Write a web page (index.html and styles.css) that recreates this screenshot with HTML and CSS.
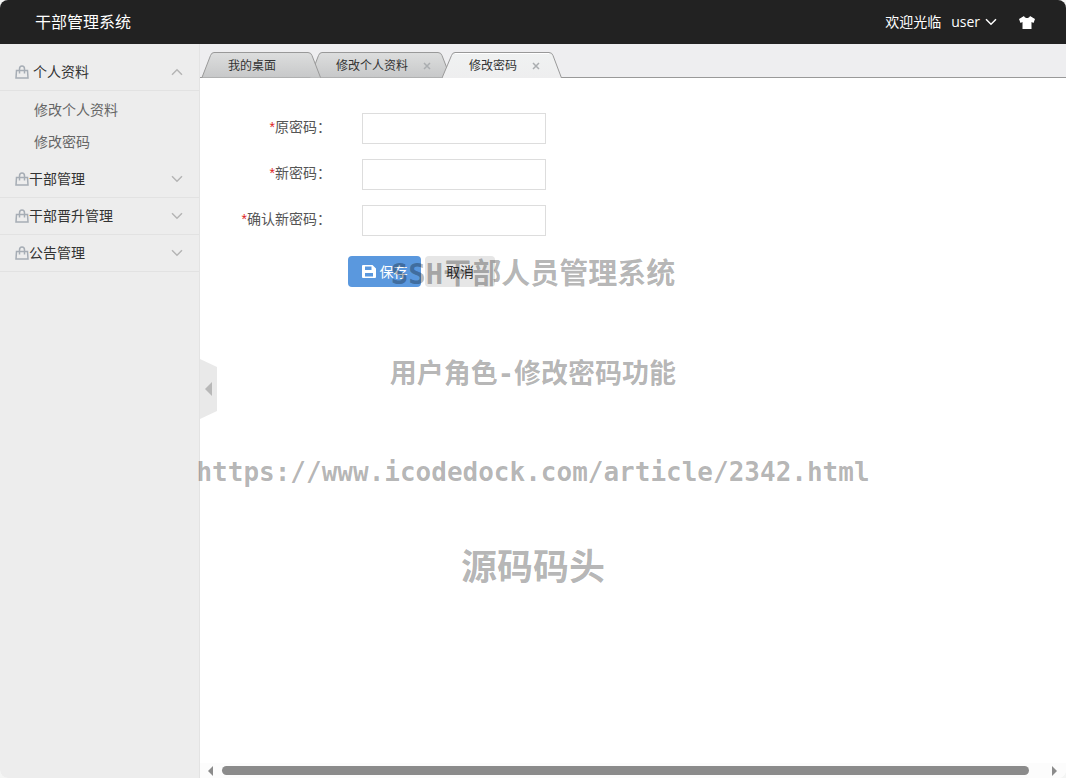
FILE: index.html
```
<!DOCTYPE html>
<html lang="zh-CN">
<head>
<meta charset="utf-8">
<title>干部管理系统</title>
<link rel="stylesheet" href="styles.css">
</head>
<body>
<svg class="defs" aria-hidden="true">
  <defs>
    <linearGradient id="tab-idle" x1="0" y1="0" x2="0" y2="1"><stop offset="0" stop-color="#dddede"/><stop offset="1" stop-color="#c7c8c9"/></linearGradient>
    <linearGradient id="tab-active" x1="0" y1="0" x2="0" y2="1"><stop offset="0" stop-color="#f0f2f2"/><stop offset="1" stop-color="#eeeeef"/></linearGradient>
    <symbol id="bag" viewBox="0 0 14 14"><path d="M1.500 5.500h11l.5 7.500H1zM4.500 8.500V4C4.500 0 9.500 0 9.500 4v4.500" fill="none" stroke="#a6adb5" stroke-width="1.500"/></symbol>
    <symbol id="down" viewBox="0 0 12 8"><path d="M1 1.200l5 5 5-5" fill="none" stroke="currentColor" stroke-width="1.500"/></symbol>
    <symbol id="up" viewBox="0 0 12 8"><path d="M1 6.700l5-5 5 5" fill="none" stroke="currentColor" stroke-width="1.500"/></symbol>
    <symbol id="cross" viewBox="0 0 8 8"><path d="M1 1l6 6M7 1l-6 6" stroke="currentColor" stroke-width="1.500"/></symbol>
  </defs>
</svg>
<div class="app">
  <header class="topbar">
    <a class="brand" href="#">干部管理系统</a>
    <nav class="user-nav">
      <span>欢迎光临</span>
      <a class="user" href="#">user<svg class="chevron"><use href="#down"/></svg></a>
      <button class="skin" type="button" aria-label="换肤"><svg viewBox="0 0 16 13"><path d="M5 0L0 3l1.500 4L3.500 6v7h9V6l2 1L16 3l-5-3C10 2.800 6 2.800 5 0z" fill="#fff"/></svg></button>
    </nav>
  </header>
  <div class="body">
    <aside class="sidebar">
      <button class="group spaced" type="button"><svg class="bag"><use href="#bag"/></svg><span>个人资料</span><svg class="chevron"><use href="#up"/></svg></button>
      <ul class="submenu">
        <li><a href="#">修改个人资料</a></li>
        <li><a href="#">修改密码</a></li>
      </ul>
      <button class="group" type="button"><svg class="bag"><use href="#bag"/></svg><span>干部管理</span><svg class="chevron"><use href="#down"/></svg></button>
      <button class="group" type="button"><svg class="bag"><use href="#bag"/></svg><span>干部晋升管理</span><svg class="chevron"><use href="#down"/></svg></button>
      <button class="group" type="button"><svg class="bag"><use href="#bag"/></svg><span>公告管理</span><svg class="chevron"><use href="#down"/></svg></button>
    </aside>
    <main class="main">
      <div class="tabs">
        <div class="tab first">
          <svg class="shape" viewBox="0 0 120 26" preserveAspectRatio="none"><path d="M1 25.500L9.500 3.500Q10.500.5 13 .5H107Q110 .5 111 3.500L119.500 25.500" fill="url(#tab-idle)" stroke="#999"/></svg>
          <a href="#">我的桌面</a>
        </div>
        <div class="tab second">
          <svg class="shape" viewBox="0 0 142 26" preserveAspectRatio="none"><path d="M1 25.500L9.500 3.500Q10.500.5 13 .5H129Q132 .5 133 3.500L141.500 25.500" fill="url(#tab-idle)" stroke="#999"/></svg>
          <a href="#">修改个人资料</a>
          <button class="close" type="button" aria-label="关闭修改个人资料"><svg><use href="#cross"/></svg></button>
        </div>
        <div class="tab active">
          <svg class="shape" viewBox="0 0 120 26" preserveAspectRatio="none"><path d="M0 26L9.500 3.500Q10.500.5 13 .5H107Q110 .5 111 3.500L119.500 26" fill="url(#tab-active)" stroke="#999"/><path d="M13 1.500H107" stroke="#fff"/></svg>
          <a href="#">修改密码</a>
          <button class="close" type="button" aria-label="关闭修改密码"><svg><use href="#cross"/></svg></button>
        </div>
      </div>
      <form class="form">
        <div class="row"><label for="old"><span class="star">*</span>原密码：</label><input id="old" type="password"></div>
        <div class="row"><label for="new"><span class="star">*</span>新密码：</label><input id="new" type="password"></div>
        <div class="row"><label for="again"><span class="star">*</span>确认新密码：</label><input id="again" type="password"></div>
        <div class="actions">
          <button class="btn save" type="button"><svg viewBox="0 0 14 13"><path d="M0 1q0-1 1-1h9.500L14 3.500V12q0 1-1 1H1q-1 0-1-1zM3 1.500V5h6.500V1.500zM3 8v3.500h8V8z" fill="#fff" fill-rule="evenodd"/></svg>保存</button>
          <button class="btn cancel" type="button">取消</button>
        </div>
      </form>
      <div class="scrollbar">
        <svg viewBox="0 0 5 10"><path d="M5 0v10L0 5z" fill="#8b8b8b"/></svg>
        <div class="thumb"></div>
        <svg viewBox="0 0 5 10"><path d="M0 0v10l5-5z" fill="#8b8b8b"/></svg>
      </div>
      <button class="collapse" type="button" aria-label="收起菜单"><svg viewBox="0 0 17 60"><path d="M0 0l17 8v44L0 60z" fill="#e9e9e9"/><path d="M12 23v14l-7-7z" fill="#b8b8b8"/></svg></button>
    </main>
  </div>
  <div class="watermark">
    <p class="mark-title">SSH干部人员管理系统</p>
    <p class="mark-sub">用户角色-修改密码功能</p>
    <p class="mark-url">https://www.icodedock.com/article/2342.html</p>
    <p class="mark-site">源码码头</p>
  </div>
</div>
</body>
</html>
```
FILE: styles.css
```
* { box-sizing: border-box; }
body { margin: 0; background: #f4f5f4; font: 14px/20px "Open Sans", "Noto Sans CJK SC", sans-serif; color: #333; }
a { color: inherit; text-decoration: none; }
button { border: 0; padding: 0; background: none; color: inherit; font: inherit; cursor: pointer; }
svg { display: block; flex: none; }
.defs { position: absolute; width: 0; height: 0; }
.app { position: relative; display: flex; flex-direction: column; min-height: 100vh; border-radius: 8px; overflow: hidden; background: #fff; }

.topbar { display: flex; align-items: center; justify-content: space-between; height: 44px; padding: 0 31px 0 35px; background: #222; color: #fff; }
.brand { font-size: 16px; }
.user-nav, .user { display: flex; align-items: center; }
.user { margin: 0 22px 0 10px; gap: 5px; }
.chevron { width: 12px; height: 8px; }
.skin svg { width: 16px; height: 13px; }

.body { display: flex; flex: 1; }
.sidebar { width: 200px; padding-top: 10px; background: #ededed; border-right: 1px solid #e3e3e3; }
.group { display: flex; align-items: center; width: 100%; height: 37px; padding: 0 16px 0 15px; border-bottom: 1px solid #e2e2e2; text-align: left; }
.group span { flex: 1; }
.group .chevron { color: #b5b5b5; }
.spaced span { padding-left: 4px; }
.bag { width: 14px; height: 14px; }
.submenu { margin: 0; padding: 3px 0 3px 34px; list-style: none; color: #666; line-height: 32px; }

.main { position: relative; display: flex; flex: 1; flex-direction: column; min-width: 0; }
.tabs { display: flex; align-items: flex-end; height: 34px; padding-left: 1px; background: #eeeef0; box-shadow: inset 0 -1px #999; font-size: 12px; line-height: 24px; }
.tab { position: relative; display: flex; align-items: center; justify-content: space-between; height: 26px; padding: 2px 20px 0 27px; }
.tab > a, .close { position: relative; }
.shape { position: absolute; inset: 0; width: 100%; height: 100%; }
.first { width: 120px; z-index: 2; }
.second { width: 142px; z-index: 1; margin-left: -12px; }
.active { width: 120px; z-index: 3; margin-left: -9px; padding-right: 22px; }
.close { color: #aaadb0; }
.close svg { width: 8px; height: 8px; }

.form { display: flex; flex: 1; flex-direction: column; gap: 15px; padding-top: 35px; }
.row { display: flex; align-items: flex-start; gap: 31px; }
.row label { width: 131px; padding-top: 4px; text-align: right; color: #555; }
.star { color: #d22; font-family: "Liberation Sans", sans-serif; }
.row input { width: 184px; height: 31px; padding: 4px 8px; border: 1px solid #ddd; font: inherit; }
.actions { display: flex; gap: 4px; margin-top: 5px; padding-left: 148px; }
.btn { display: flex; align-items: center; justify-content: center; gap: 4px; height: 31px; border-radius: 4px; }
.save { width: 73px; background: #5a98de; color: #fff; }
.save svg { width: 14px; height: 13px; }
.cancel { width: 70px; background: #e6e6e6; }

.scrollbar { display: flex; align-items: center; gap: 9px; height: 15px; padding: 0 9px 0 8px; background: #fcfcfc; }
.scrollbar svg { width: 5px; height: 10px; }
.scrollbar .thumb { flex: 1; height: 9px; margin-right: 14px; border-radius: 5px; background: #8b8b8b; }
.collapse { position: absolute; left: 0; top: 315px; }
.collapse svg { width: 17px; height: 60px; }

.watermark { position: absolute; top: 252px; left: 0; right: 0; display: flex; flex-direction: column; align-items: center; color: rgba(0, 0, 0, 0.3); font-family: "DejaVu Sans Mono", "Noto Sans CJK SC", monospace; font-weight: 700; white-space: nowrap; pointer-events: none; }
.watermark p { margin: 0; }
.mark-title { font-size: 29px; line-height: 44px; }
.mark-sub { padding-top: 56px; font-size: 27px; line-height: 44px; }
.mark-url { padding-top: 54px; font-size: 26px; line-height: 44px; }
.mark-site { padding-top: 50px; font-size: 36px; line-height: 48px; }
```
